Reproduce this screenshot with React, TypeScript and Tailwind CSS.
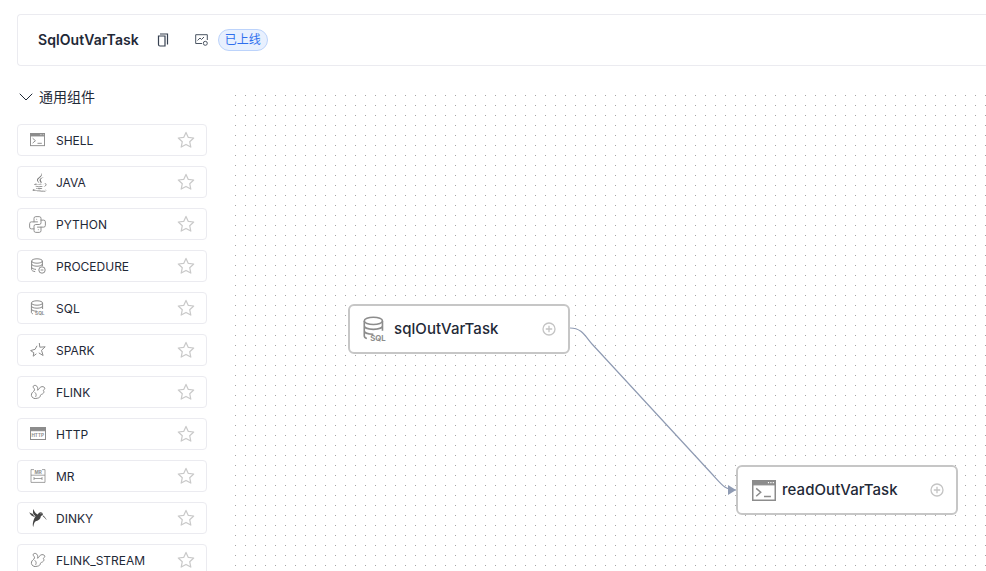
import { ChevronDown } from 'lucide-react'
import { FaJava } from 'react-icons/fa'
import { GiHummingbird } from 'react-icons/gi'
import { TbBrandPython } from 'react-icons/tb'
import type { ReactNode } from 'react'

const FONT = "font-['Inter','Noto_Sans_CJK_SC',sans-serif]"

function StarOutline() {
  return (
    <svg width="18" height="18" viewBox="0 0 18 18" fill="none" stroke="#c9c9c9" strokeWidth="1.2" strokeLinejoin="round">
      <path d="M9 1.4l2.3 5 5.4.6-4 3.7 1.1 5.4L9 13.4l-4.8 2.7 1.1-5.4-4-3.7 5.4-.6z" />
    </svg>
  )
}

function ShellIcon({ size = 15 }: { size?: number }) {
  return (
    <svg width={size} height={size * 0.875} viewBox="0 0 16 14" fill="none" stroke="#8c8c8c">
      <rect x="0.5" y="0.5" width="15" height="13" fill="#fff" strokeWidth="1" />
      <rect x="0.5" y="0.5" width="15" height="2.8" fill="#8c8c8c" strokeWidth="0.6" />
      <path d="M10.6 1.8h.8M12.2 1.8h.8M13.8 1.8h.8" stroke="#fff" strokeWidth="0.8" />
      <path d="M2.8 5.6l3 2.6-3 2.6M8 11h4.6" strokeWidth="1" />
    </svg>
  )
}

function DbIcon({ badge }: { badge?: ReactNode }) {
  return (
    <svg width="16" height="16" viewBox="0 0 16 16" fill="none" stroke="#8c8c8c" strokeWidth="1">
      <ellipse cx="7" cy="3" rx="5.4" ry="2.2" />
      <path d="M1.6 3v8.4c0 1.2 1.6 2 3.6 2.2M12.4 3v5M1.6 6c0 1.3 2.4 2.2 5.4 2.2S12.4 7.300 12.400 6M1.600 9.200c0 1.200 2 2 4.400 2.200" />
      {badge}
    </svg>
  )
}

function SqlIcon({ size = 16 }: { size?: number }) {
  return (
    <svg width={size} height={size} viewBox="0 0 16 16" fill="none" stroke="#8c8c8c" strokeWidth="1">
      <ellipse cx="7" cy="3" rx="5.6" ry="2.200" />
      <path d="M1.400 3v9.200c0 .8.600 1.400 1.600 1.600M12.600 3v6M1.400 6c0 1.300 2.500 2.200 5.600 2.200S12.600 7.300 12.600 6M1.400 9c0 1.300 2.500 2.200 5.600 2.200" />
      <text x="5" y="15.200" fontSize="4.800" fontWeight="700" fill="#8c8c8c" stroke="none" fontFamily="Inter, sans-serif">SQL</text>
    </svg>
  )
}

function SparkIcon() {
  return (
    <svg width="16" height="16" viewBox="0 0 16 16" fill="none" stroke="#8c8c8c" strokeWidth="1" strokeLinejoin="round">
      <path d="M9.300 1l.5 4.200 5.400-.4-3.700 3.500 1.600 5.200-4.300-2.600" />
      <path d="M6.400 11.800l-3.200 2.400.6-3.500L.6 8.600l4.500-1.300L7 3.800" />
    </svg>
  )
}

function HttpIcon() {
  return (
    <svg width="16" height="14" viewBox="0 0 16 14" fill="none" stroke="#8c8c8c">
      <rect x="0.500" y="0.500" width="15" height="12" fill="#fff" strokeWidth="1" />
      <rect x="0.500" y="0.500" width="15" height="3.400" fill="#8c8c8c" strokeWidth="0.600" />
      <text x="1.400" y="10" fontSize="4.600" fontWeight="700" fill="#8c8c8c" stroke="none" fontFamily="Inter, sans-serif">HTTP</text>
    </svg>
  )
}

function MrIcon() {
  return (
    <svg width="16" height="14" viewBox="0 0 16 14" fill="none" stroke="#8c8c8c" strokeWidth="0.800">
      <path d="M4 .6H1v12.800h14V.6h-3" />
      <text x="4.400" y="4.800" fontSize="4.600" fontWeight="700" fill="#8c8c8c" stroke="none" fontFamily="Inter, sans-serif">MR</text>
      <path d="M1 6.200h14M4 9.500h8M4 8v3M12 8v3" />
    </svg>
  )
}

function ProcedureIcon() {
  return (
    <DbIcon
      badge={
        <>
          <circle cx="12" cy="12" r="3.200" fill="#fff" />
          <path d="M10.600 12h2.800" />
        </>
      }
    />
  )
}

// tail on the right, head and neck curling up on the left
function FlinkIcon() {
  return (
    <svg width="17" height="16" viewBox="0 0 17 16" fill="none" stroke="#8c8c8c" strokeWidth="1" strokeLinejoin="round" strokeLinecap="round">
      <path d="M4.500 14.500C2 14 1 12 1.500 10c.4-1.800 2.500-2.400 3-4C4.800 4.800 3.500 4 3 3c0-1.200 1.500-2 2.800-1.500C7.500 2.200 8 4 7.800 6" />
      <path d="M7.800 6c1-1 1.600-2 3-3 1.500-.8 3.400-.3 4 1 .2 1.200-.8 1.800-1.600 2.400.8.600 1 1.800.2 2.800-1 1.200-2.400 1-3 2 0 1.800-1 3.300-5.900 3.300" />
      <path d="M5 8.500c1.300 1 1.500 2.500.8 4" />
    </svg>
  )
}

const ITEMS: { label: string; icon: ReactNode }[] = [
  { label: 'SHELL', icon: <ShellIcon /> },
  { label: 'JAVA', icon: <FaJava size={19} color="#777" /> },
  { label: 'PYTHON', icon: <TbBrandPython size={21} color="#8c8c8c" strokeWidth={1.100} className="-ml-[3px]" /> },
  { label: 'PROCEDURE', icon: <ProcedureIcon /> },
  { label: 'SQL', icon: <SqlIcon /> },
  { label: 'SPARK', icon: <SparkIcon /> },
  { label: 'FLINK', icon: <FlinkIcon /> },
  { label: 'HTTP', icon: <HttpIcon /> },
  { label: 'MR', icon: <MrIcon /> },
  { label: 'DINKY', icon: <GiHummingbird size={20} color="#444" className="-ml-[2px]" /> },
  { label: 'FLINK_STREAM', icon: <FlinkIcon /> },
]

function PlusCircle() {
  return (
    <svg width="14" height="14" viewBox="0 0 14 14" fill="none" stroke="#c4c4c4" strokeWidth="1.300">
      <circle cx="7" cy="7" r="6" />
      <path d="M7 3.800v6.400M3.800 7h6.400" />
    </svg>
  )
}

function TaskNode({ name, icon, className }: { name: string; icon: ReactNode; className: string }) {
  return (
    <div className={`absolute flex h-[50px] w-[222px] items-center rounded-md border-2 border-[#c6c6c6] bg-white pl-[12px] pr-[12px] ${className}`}>
      <span className="flex w-[26px] shrink-0 justify-end">{icon}</span>
      <span className="ml-[6px] flex-1 pt-px text-[15px] font-medium tracking-[0.07px] text-[#1f2937]">{name}</span>
      <PlusCircle />
    </div>
  )
}

export default function App() {
  return (
    <div className={`flex h-[571px] w-[986px] flex-col overflow-hidden bg-white pl-[17px] pt-[14px] ${FONT}`}>
      {/* Title bar */}
      <header className="flex h-[52px] shrink-0 items-center rounded-l border border-r-0 border-[#ebebf0] pl-5">
        <span className="text-sm font-semibold tracking-[0.08px] text-[#1f2937]">SqlOutVarTask</span>
        <svg className="ml-[18px]" width="12" height="14" viewBox="0 0 12 14" fill="none" stroke="#374151" strokeWidth="1.200">
          <path d="M3 1h7.500v10.500" />
          <path d="M1.500 3h6.500v10H3c-.800 0-1.500-.700-1.500-1.500z" />
        </svg>
        <svg className="ml-[26px]" width="13" height="12" viewBox="0 0 13 12" fill="none" stroke="#4b5563" strokeWidth="1">
          <path d="M7 9.500H.700V.700h11.600V6" />
          <path d="M2.500 6.500L5 4l1.500 1.500L9 3" />
          <circle cx="10.300" cy="9.300" r="2" />
        </svg>
        <span className="ml-[10px] flex h-[22px] w-[50px] items-center justify-center rounded-full border border-[#bcd3fb] bg-[#e8f0fe] text-xs text-[#2f6fed]">已上线</span>
      </header>

      <div className="flex min-h-0 flex-1">
        {/* Component list */}
        <aside className="w-[190px] shrink-0">
          <div className="flex h-[58px] items-center pt-[4px] text-sm text-[#1f2937]">
            <ChevronDown size={24} strokeWidth={1} className="-ml-[3px] mr-px" />
            通用组件
          </div>
          <div className="flex flex-col gap-[10px]">
            {ITEMS.map(({ label, icon }) => (
              <div key={label} className="flex h-[32px] shrink-0 items-center rounded border border-[#ebebf0] bg-white pl-3 pr-[11px]">
                <span className="flex w-[26px] shrink-0 items-center">{icon}</span>
                <span className="flex-1 pt-[2px] text-xs text-[#1f2937]">{label}</span>
                <StarOutline />
              </div>
            ))}
          </div>
        </aside>

        {/* Graph canvas */}
        <main className="relative flex-1">
          <svg className="absolute inset-0 h-full w-full">
            <defs>
              <pattern id="grid" width="10" height="10" patternUnits="userSpaceOnUse" x="8" y="9">
                <rect width="1" height="1" fill="#a6a6a6" />
              </pattern>
              <marker id="arrow" markerWidth="9" markerHeight="10" refX="8" refY="5" orient="auto" markerUnits="userSpaceOnUse">
                <path d="M0 0L8 5L0 10z" fill="#8f9bb3" />
              </marker>
            </defs>
            <rect x="28" y="29" width="100%" height="100%" fill="url(#grid)" />
            <path d="M363 262C375 262 378 270 385 278L505 408C515 419 518 424 529 424" fill="none" stroke="#8f9bb3" strokeWidth="1.200" markerEnd="url(#arrow)" />
          </svg>
          <TaskNode name="sqlOutVarTask" icon={<SqlIcon size={26} />} className="left-[141px] top-[238px]" />
          <TaskNode name="readOutVarTask" icon={<ShellIcon size={24} />} className="left-[529px] top-[399px]" />
        </main>
      </div>
    </div>
  )
}
